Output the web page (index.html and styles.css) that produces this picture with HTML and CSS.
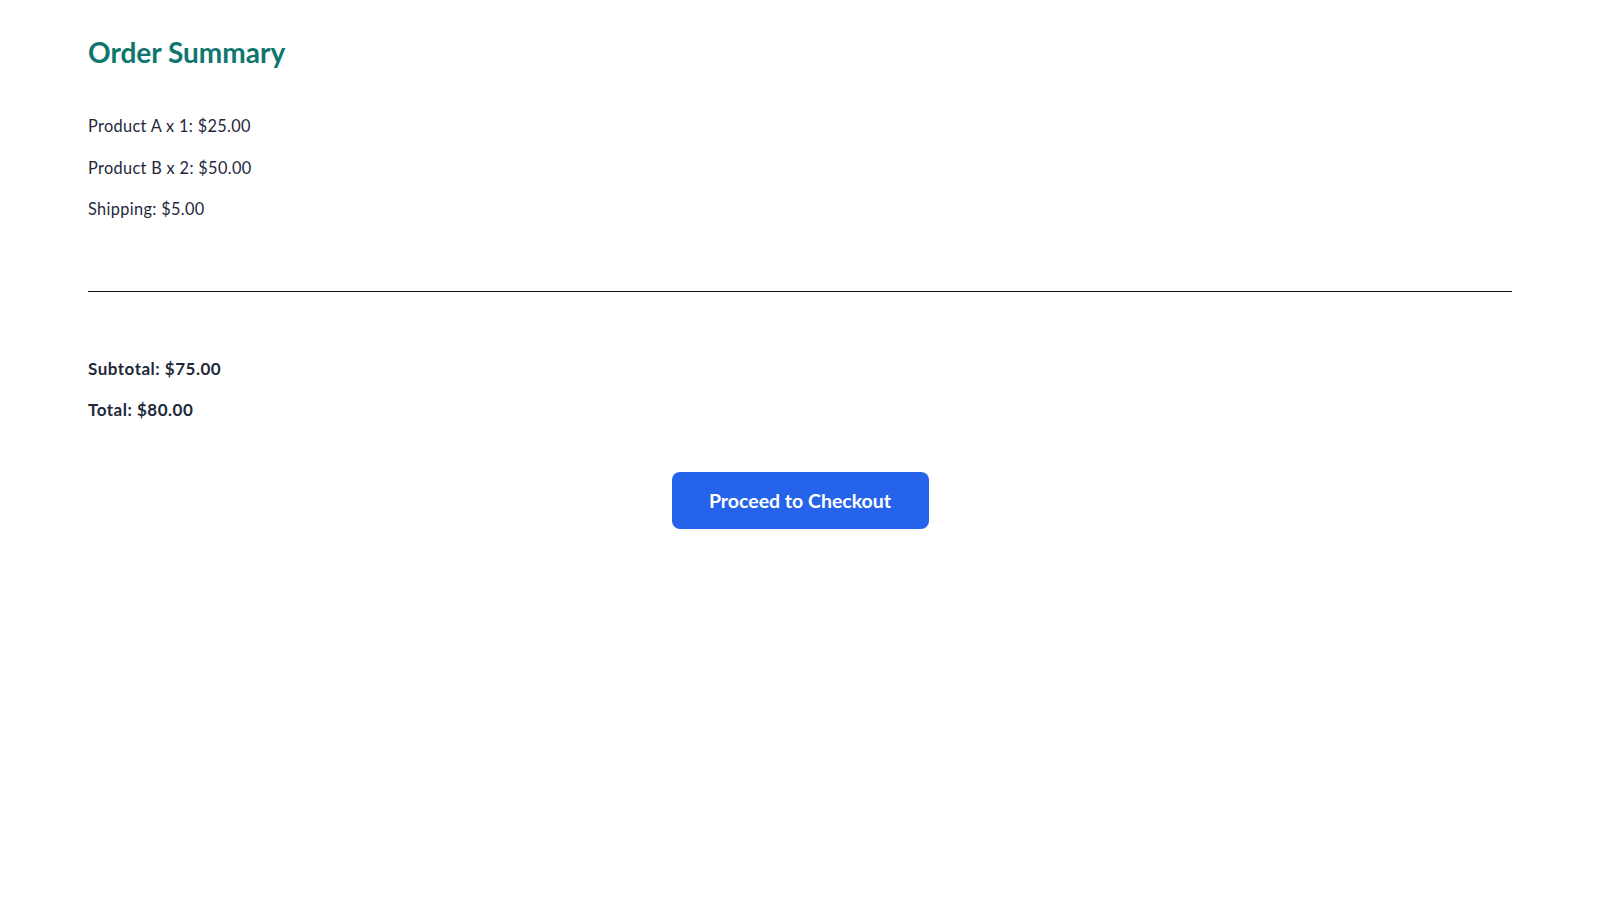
FILE: index.html
```html
<!DOCTYPE html>
<html lang="en">
<head>
<meta charset="utf-8">
<title>Order Summary</title>
<link rel="stylesheet" href="styles.css">
</head>
<body>
<main class="summary">
  <h1 class="title">Order Summary</h1>
  <div class="items">
    <p class="line">Product A x 1: $25.00</p>
    <p class="line">Product B x 2: $50.00</p>
    <p class="line">Shipping: $5.00</p>
  </div>
  <hr class="divider">
  <div class="totals">
    <p class="line strong">Subtotal: $75.00</p>
    <p class="line strong">Total: $80.00</p>
  </div>
  <div class="actions">
    <button class="checkout" type="button">Proceed to Checkout</button>
  </div>
</main>
</body>
</html>
```

FILE: styles.css
```css
html, body {
  margin: 0;
  padding: 0;
  background: #ffffff;
}

body {
  font-family: "Lato", "Noto Sans", sans-serif;
  color: #1e293b;
}

.summary {
  padding: 35px 88px 0;
  display: flex;
  flex-direction: column;
}

.title {
  margin: 0 0 44px;
  font-size: 28px;
  line-height: 34px;
  font-weight: 700;
  color: #0f766e;
}

.items,
.totals {
  display: flex;
  flex-direction: column;
  gap: 16px;
}

.line {
  margin: 0;
  font-size: 16.3px;
  line-height: 25.6px;
  letter-spacing: 0.35px;
}

.strong {
  font-weight: 700;
  font-size: 17px;
  letter-spacing: 0.5px;
}

.divider {
  margin: 69px 0 64px;
  border: 0;
  border-top: 1px solid #111111;
  height: 0;
}

.actions {
  display: flex;
  justify-content: center;
  margin-top: 49px;
}

.checkout {
  width: 257px;
  height: 57px;
  border: 0;
  border-radius: 8px;
  background: #2563eb;
  color: #ffffff;
  font-family: "Lato", "Noto Sans", sans-serif;
  font-size: 19.5px;
  font-weight: 700;
  cursor: pointer;
}
```
